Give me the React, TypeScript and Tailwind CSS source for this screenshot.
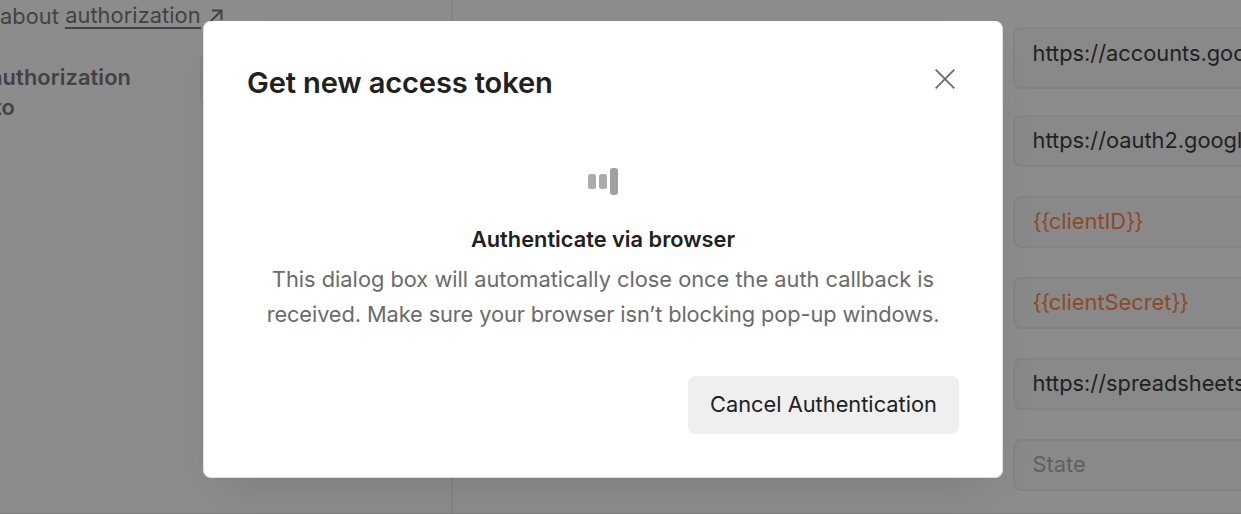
import React from 'react';

type Field = { text: string; variable?: boolean; tone: string; size: string };

const fields: Field[] = [
  { text: 'https://accounts.google.com/o/oauth2/auth', tone: 'text-[#282828]', size: 'h-[62px] mb-[25.6px] pb-[9px]' },
  { text: 'https://oauth2.googleapis.com/token', tone: 'text-[#282828]', size: 'h-[52px] mb-[29px]' },
  { text: 'clientID', variable: true, tone: 'text-[#ff7a38]', size: 'h-[52px] mb-[29px]' },
  { text: 'clientSecret', variable: true, tone: 'text-[#ff7a38]', size: 'h-[52px] mb-[29px]' },
  { text: 'https://spreadsheets.google.com/feeds/', tone: 'text-[#282828]', size: 'h-[52px] mb-[29px]' },
  { text: 'State', tone: 'text-[#a6a6a6]', size: 'h-[52px]' },
];

function Background() {
  return (
    <div className="flex h-full w-full border-b border-[#e0e0e0]">
      <div className="h-full w-[453px] shrink-0 border-r-2 border-[#ededed] text-[21.8px] text-[#6b6b6b]">
        <div className="flex h-[32px] items-center whitespace-nowrap tracking-[0.06px]">
          <span>about&nbsp;</span>
          <span className="border-b-2 border-[#6b6b6b] leading-[24px]">authorization</span>
          <svg className="ml-[8px]" width="14" height="14" viewBox="0 0 14 14" fill="none" stroke="currentColor" strokeWidth="2">
            <path d="M1 13 12 2M3 1.5h9.5V11" />
          </svg>
        </div>
        <div className="flex pt-[20px]">
          <div className="-ml-[10px] w-[210px] pt-[11px] font-semibold leading-[29.5px] tracking-[0.1px]">
            <div>authorization</div>
            <div className="pl-[4px]">to</div>
          </div>
          <div className="h-[54px] w-[200px] rounded-lg border-2 border-[#ededed] bg-[#f9f9f9]" />
        </div>
      </div>
      <div className="flex flex-1 flex-col overflow-hidden pl-[560px] pt-[27px]">
        {fields.map((f) => (
          <div
            key={f.text}
            className={`flex w-[400px] shrink-0 items-center whitespace-nowrap rounded-[8px] border-2 border-[#ededed] bg-[#f9f9f9] pl-[17.6px] text-[21.8px] ${f.tone} ${f.size}`}
          >
            {f.variable ? (
              <>
                <span className="tracking-[-1.2px]">{'{{'}</span>
                {f.text}
                <span className="tracking-[-1.2px]">{'}}'}</span>
              </>
            ) : (
              f.text
            )}
          </div>
        ))}
      </div>
    </div>
  );
}

export default function App() {
  return (
    <div className="relative h-[514px] w-[1241px] overflow-hidden bg-white font-['Inter',sans-serif]">
      <Background />
      <div className="absolute inset-0 flex items-start bg-[#1a1a1a]/50 pl-[203px] pt-[21px]">
        <div
          role="dialog"
          className="flex h-[457px] w-[800px] flex-col rounded-[8px] border border-t-0 border-[#e0e0e0] bg-white px-[43px] shadow-[0_24px_48px_-20px_rgba(0,0,0,0.12)]"
        >
          <div className="flex h-[123px] items-center justify-between">
            <h1 className="text-[29.1px] font-semibold tracking-[-0.15px] text-[#212121]">Get new access token</h1>
            <button aria-label="Close" className="mr-[4.5px] mb-[7.5px]">
              <svg width="20" height="20" viewBox="0 0 20 20" fill="none" stroke="#6b6b6b" strokeWidth="1.8">
                <path d="M.7.7 19.3 19.3M19.3.7.7 19.3" />
              </svg>
            </button>
          </div>
          <div className="flex flex-col items-center">
            <div className="mt-[23px] flex h-[28px] items-center gap-[3px]">
              <div className="h-[15px] w-[8px] rounded-[2.5px] bg-[#acacac]" />
              <div className="h-[15px] w-[8px] rounded-[2.5px] bg-[#acacac]" />
              <div className="h-[27px] w-[8px] rounded-[3px] bg-[#a0a0a0]" />
            </div>
            <h2 className="mt-[26px] text-[21.8px] font-semibold leading-[36px] text-[#212121]">Authenticate via browser</h2>
            <p className="mt-[4.5px] whitespace-nowrap text-center text-[21.8px] leading-[35.5px] text-[#6b6b6b]">
              This dialog box will automatically close once the auth callback is
              <br />
              <span className="tracking-[-0.1px]">received. Make sure your browser isn’t blocking pop-up windows.</span>
            </p>
          </div>
          <div className="mt-[43.5px] flex justify-end">
            <button className="h-[58px] w-[271px] rounded-[8px] bg-[#efefef] pb-[2px] text-[21.8px] text-[#212121]">
              Cancel Authentication
            </button>
          </div>
        </div>
      </div>
    </div>
  );
}
